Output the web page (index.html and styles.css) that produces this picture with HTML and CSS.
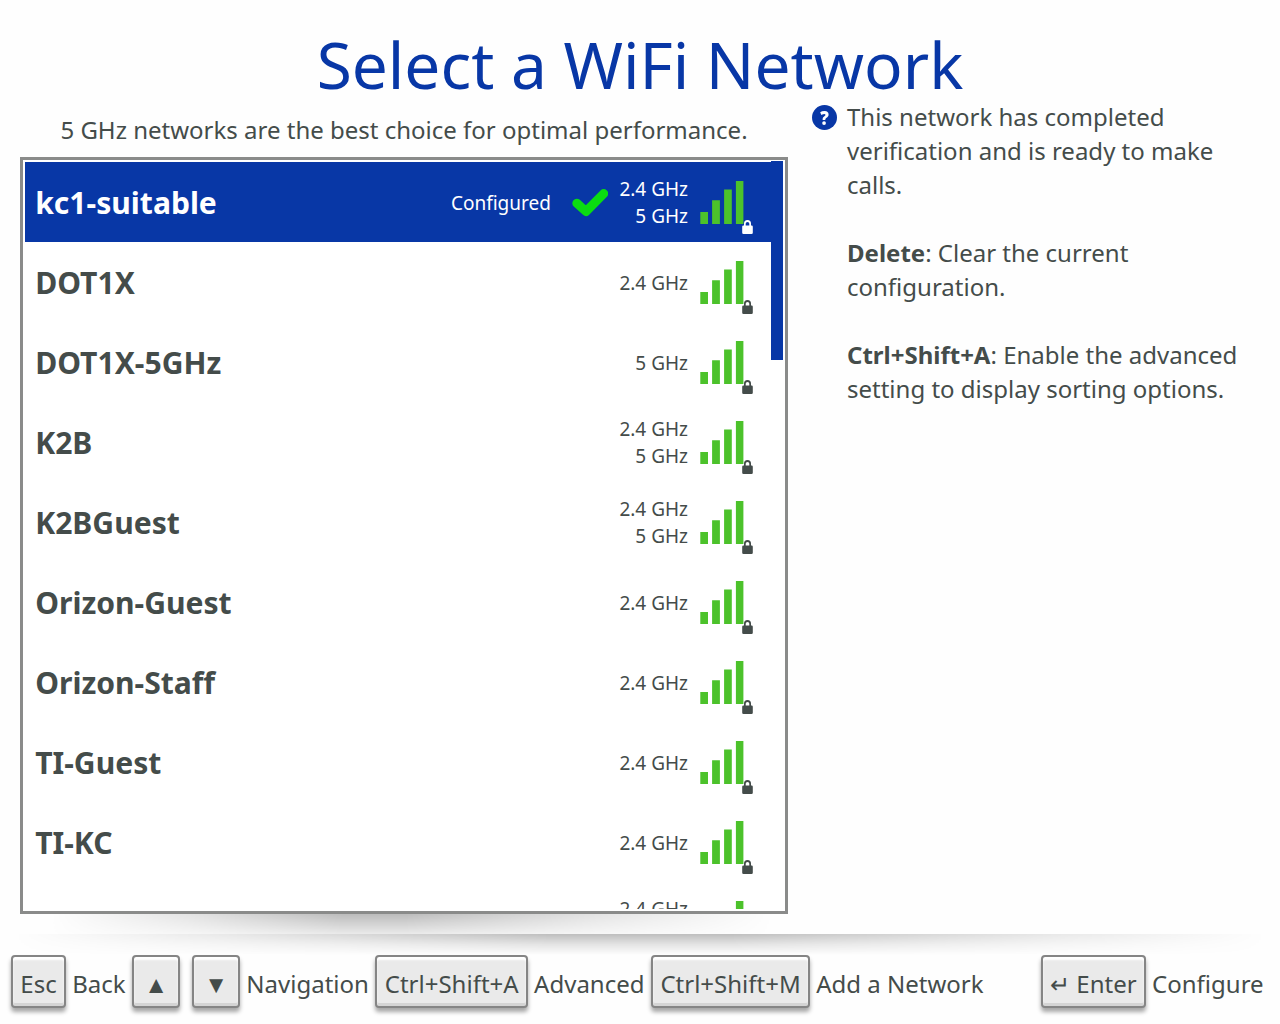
FILE: index.html
```html
<!DOCTYPE html>
<html lang="en">
<head>
<meta charset="utf-8">
<title>Select a WiFi Network</title>
<link rel="stylesheet" href="styles.css">
</head>
<body>
<svg class="defs" width="0" height="0" aria-hidden="true">
  <symbol id="signal" viewBox="0 0 44 43">
    <path d="M.3 31h7.7v12H.3zM12.1 19.2h7.8V43h-7.8zM24.1 8.6h7.7V43h-7.7zM35.9 0h7.5v43h-7.5z"/>
  </symbol>
  <symbol id="lock" viewBox="0 0 11 14">
    <path fill-rule="evenodd" d="M1.300 5.500H2V3.600a3.500 3.500 0 0 1 7 0v1.900h.7q1.100 0 1.100 1.200v6q0 1.300-1.300 1.300H1.500Q.2 14 .2 12.700v-6q0-1.200 1.100-1.200zM3.700 5.500h3.600V3.700a1.800 1.800 0 0 0-3.600 0z"/>
  </symbol>
</svg>
<main class="page">
  <h1 class="title">Select a WiFi Network</h1>
  <div class="content">
    <section class="networks">
      <p class="hint">5 GHz networks are the best choice for optimal performance.</p>
      <div class="panel">
        <ul class="list">
          <li class="row selected"><span class="name">kc1-suitable</span><span class="status">Configured</span><svg class="check" viewBox="0 0 36 28"><path d="M4.800 14.200l9.200 8.300L31.700 4.600"/></svg><span class="bands">2.4 GHz<br>5 GHz</span><span class="strength"><svg class="bars"><use href="#signal"/></svg><svg class="lock"><use href="#lock"/></svg></span></li>
          <li class="row"><span class="name">DOT1X</span><span class="bands">2.4 GHz</span><span class="strength"><svg class="bars"><use href="#signal"/></svg><svg class="lock"><use href="#lock"/></svg></span></li>
          <li class="row"><span class="name">DOT1X-5GHz</span><span class="bands">5 GHz</span><span class="strength"><svg class="bars"><use href="#signal"/></svg><svg class="lock"><use href="#lock"/></svg></span></li>
          <li class="row"><span class="name">K2B</span><span class="bands">2.4 GHz<br>5 GHz</span><span class="strength"><svg class="bars"><use href="#signal"/></svg><svg class="lock"><use href="#lock"/></svg></span></li>
          <li class="row"><span class="name">K2BGuest</span><span class="bands">2.4 GHz<br>5 GHz</span><span class="strength"><svg class="bars"><use href="#signal"/></svg><svg class="lock"><use href="#lock"/></svg></span></li>
          <li class="row"><span class="name">Orizon-Guest</span><span class="bands">2.4 GHz</span><span class="strength"><svg class="bars"><use href="#signal"/></svg><svg class="lock"><use href="#lock"/></svg></span></li>
          <li class="row"><span class="name">Orizon-Staff</span><span class="bands">2.4 GHz</span><span class="strength"><svg class="bars"><use href="#signal"/></svg><svg class="lock"><use href="#lock"/></svg></span></li>
          <li class="row"><span class="name">TI-Guest</span><span class="bands">2.4 GHz</span><span class="strength"><svg class="bars"><use href="#signal"/></svg><svg class="lock"><use href="#lock"/></svg></span></li>
          <li class="row"><span class="name">TI-KC</span><span class="bands">2.4 GHz</span><span class="strength"><svg class="bars"><use href="#signal"/></svg><svg class="lock"><use href="#lock"/></svg></span></li>
          <li class="row"><span class="bands">2.4 GHz<br>5 GHz</span><span class="strength"><svg class="bars"><use href="#signal"/></svg><svg class="lock"><use href="#lock"/></svg></span></li>
        </ul>
        <div class="scroll"><div class="thumb"></div></div>
      </div>
      <div class="panel-shadow"></div>
    </section>
    <aside class="help">
      <span class="help-icon"><span class="mark">?</span></span>
      <div class="help-text">
        <p>This network has completed verification and is ready to make calls.</p>
        <p><b>Delete</b>: Clear the current configuration.</p>
        <p><b>Ctrl+Shift+A</b>: Enable the advanced setting to display sorting options.</p>
      </div>
    </aside>
  </div>
  <div class="footer-shadow"></div>
  <footer class="footer">
    <kbd class="key">Esc</kbd><span class="label">Back</span>
    <kbd class="key arrow up">▲</kbd><kbd class="key arrow">▼</kbd><span class="label">Navigation</span>
    <kbd class="key">Ctrl+Shift+A</kbd><span class="label">Advanced</span>
    <kbd class="key">Ctrl+Shift+M</kbd><span class="label">Add a Network</span>
    <kbd class="key enter">↵ Enter</kbd><span class="label last">Configure</span>
  </footer>
</main>
</body>
</html>
```
FILE: styles.css
```css
* { box-sizing: border-box; }
body {
  margin: 0;
  background: #fefefe;
  color: #444c4a;
  font: 24px/34px "Noto Sans", "Open Sans", sans-serif;
}
.defs { display: block; height: 0; }
.page { display: flex; flex-direction: column; height: 1024px; overflow: hidden; }
.title {
  margin: 0;
  height: 100px;
  padding-top: 21px;
  text-align: center;
  color: #0837a6;
  font-size: 64px;
  font-weight: 400;
  line-height: 88px;
}
.content { display: flex; height: 834px; padding-left: 20px; }
.networks { width: 768px; display: flex; flex-direction: column; }
.hint { margin: 0; padding-top: 13px; height: 57px; text-align: center; }
.panel {
  display: flex;
  height: 757px;
  padding: 1px 2px 2px;
  border: 3px solid #8a8b8a;
  background: #fff;
}
.list { flex: 1; margin: 0; padding: 1px 0 0; list-style: none; overflow: hidden; }
.row {
  display: flex;
  align-items: center;
  height: 80px;
  padding: 2px 18px 0 10.2px;
}
.selected { background: #0837a6; color: #fff; }
.name { margin-right: auto; font-size: 30.08px; font-weight: 700; }
.status { font-size: 19px; }
.check {
  width: 36px;
  height: 28px;
  margin: -1px 11.5px 0 21px;
  fill: none;
  stroke: #0bdc12;
  stroke-width: 9;
  stroke-linecap: round;
  stroke-linejoin: round;
}
.bands { margin-left: auto; text-align: right; font-size: 19px; line-height: 27px; }
.name + .bands, .check + .bands { margin-left: 0; }
.strength { display: flex; align-items: flex-end; width: 53px; height: 53px; margin: 8px 0 0 12px; }
.bars { flex: none; width: 44px; height: 43px; align-self: flex-start; fill: #4cc22b; }
.lock { flex: none; width: 11px; height: 14px; margin-left: -2px; fill: #444c4a; }
.selected .lock { fill: #fff; }
.scroll { width: 12px; }
.thumb { height: 199px; background: #0837a6; }
.panel-shadow {
  height: 20px;
  background: linear-gradient(rgba(0,0,0,.26), rgba(0,0,0,.08));
  mask-image: linear-gradient(95deg, transparent 4%, rgba(0,0,0,.4) 22%, #000 42%, #000 50%, rgba(0,0,0,.4) 75%, transparent 98%);
}
.help { display: flex; flex: 1; padding: 0 20px 0 24px; }
.help-icon {
  flex: none;
  width: 25px;
  height: 25px;
  margin-top: 5px;
  border-radius: 50%;
  background: #0837a6;
  color: #fff;
  font-size: 20px;
  font-weight: 900;
  line-height: 25px;
  text-align: center;
}
.mark { display: block; transform: scaleX(.85); }
.help-text { margin-left: 10px; }
.help-text p { margin: 0 0 34px; }
.footer-shadow {
  height: 21px;
  background: linear-gradient(rgba(0,0,0,.25), rgba(0,0,0,.1) 50%, transparent);
  mask-image: linear-gradient(90deg, transparent 1%, rgba(0,0,0,.35) 18%, #000 43%, #000 57%, rgba(0,0,0,.35) 82%, transparent 99%);
}
.footer {
  display: flex;
  align-items: flex-start;
  height: 69px;
  padding: 0 16.4px 0 11px;
}
.key {
  flex: none;
  height: 53px;
  padding: 10px 7.3px 0;
  border: 2px solid #858585;
  border-radius: 4px;
  background: #eaeaea;
  box-shadow: inset 0 3px 2px #fff, inset 0 -3px 0 #d4d4d4, 0 4px 4px rgba(0,0,0,.35);
  font: inherit;
  white-space: nowrap;
}
.label { margin: 12px 6.6px 0 6.2px; white-space: nowrap; }
.arrow { width: 48px; text-align: center; }
.up { margin-right: 12px; }
.enter { margin-left: auto; }
.last { margin-right: 0; }
```
